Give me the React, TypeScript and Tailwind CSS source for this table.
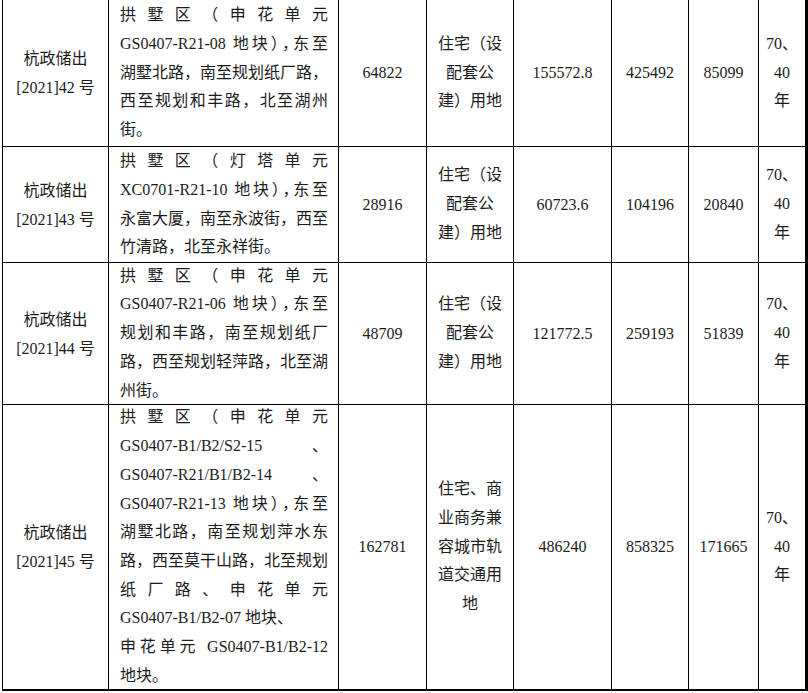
import type { ReactNode } from "react";

type Line = { t: ReactNode; j?: boolean };

type Row = {
  no: string;
  desc: Line[];
  area: string;
  use: string[];
  build: string;
  price: string;
  deposit: string;
};

// half-width comma after a closing bracket, so the code lines fit
const Cm = () => <span className="[font-feature-settings:'halt']">，</span>;

const rows: Row[] = [
  {
    no: "42",
    desc: [
      { t: "拱墅区（申花单元", j: true },
      { t: <>GS0407-R21-08 地块）<Cm />东至</>, j: true },
      { t: "湖墅北路，南至规划纸厂路，", j: true },
      { t: "西至规划和丰路，北至湖州", j: true },
      { t: "街。" },
    ],
    area: "64822",
    use: ["住宅（设", "配套公", "建）用地"],
    build: "155572.8",
    price: "425492",
    deposit: "85099",
  },
  {
    no: "43",
    desc: [
      { t: "拱墅区（灯塔单元", j: true },
      { t: <>XC0701-R21-10 地块）<Cm />东至</>, j: true },
      { t: "永富大厦，南至永波街，西至", j: true },
      { t: "竹清路，北至永祥街。" },
    ],
    area: "28916",
    use: ["住宅（设", "配套公", "建）用地"],
    build: "60723.6",
    price: "104196",
    deposit: "20840",
  },
  {
    no: "44",
    desc: [
      { t: "拱墅区（申花单元", j: true },
      { t: <>GS0407-R21-06 地块）<Cm />东至</>, j: true },
      { t: "规划和丰路，南至规划纸厂", j: true },
      { t: "路，西至规划轻萍路，北至湖", j: true },
      { t: "州街。" },
    ],
    area: "48709",
    use: ["住宅（设", "配套公", "建）用地"],
    build: "121772.5",
    price: "259193",
    deposit: "51839",
  },
  {
    no: "45",
    desc: [
      { t: "拱墅区（申花单元", j: true },
      { t: "GS0407-B1/B2/S2-15 、", j: true },
      { t: "GS0407-R21/B1/B2-14 、", j: true },
      { t: <>GS0407-R21-13 地块）<Cm />东至</>, j: true },
      { t: "湖墅北路，南至规划萍水东", j: true },
      { t: "路，西至莫干山路，北至规划", j: true },
      { t: "纸厂路、申花单元", j: true },
      { t: "GS0407-B1/B2-07 地块、" },
      { t: "申花单元 GS0407-B1/B2-12", j: true },
      { t: "地块。" },
    ],
    area: "162781",
    use: ["住宅、商", "业商务兼", "容城市轨", "道交通用", "地"],
    build: "486240",
    price: "858325",
    deposit: "171665",
  },
];

function Cell({ children, last, bottom }: { children: ReactNode; last?: boolean; bottom?: boolean }) {
  return (
    <div
      className={
        "flex flex-col items-center justify-center border-black text-center " +
        (last ? "border-r-[3px] " : "border-r ") +
        (bottom ? "border-b-2" : "border-b")
      }
    >
      {children}
    </div>
  );
}

export default function App() {
  return (
    <div className="h-[693px] w-[808px] overflow-hidden bg-white text-[16px] text-[#1c1c1c] font-['Liberation_Serif','Noto_Sans_CJK_SC',serif]">
      <div className="ml-[2px] grid grid-cols-[106px_230px_88px_87px_98px_77px_70px_49px] grid-rows-[147px_116px_142px_286px] border-l border-black">
        {rows.map((r, i) => {
          const bottom = i === rows.length - 1;
          return (
            <div key={r.no} className="contents">
              <Cell bottom={bottom}>
                <div className="leading-[29px]">
                  <div>杭政储出</div>
                  <div>[2021]{r.no} 号</div>
                </div>
              </Cell>
              <div
                className={
                  "flex flex-col justify-center border-r border-black pl-[11px] pr-[10px] leading-[28.7px] " +
                  (bottom ? "border-b-2" : "border-b")
                }
              >
                {r.desc.map((l, k) => (
                  <div
                    key={k}
                    className={
                      "whitespace-nowrap " + (l.j ? "text-justify [text-align-last:justify]" : "text-left")
                    }
                  >
                    {l.t}
                  </div>
                ))}
              </div>
              <Cell bottom={bottom}>{r.area}</Cell>
              <Cell bottom={bottom}>
                <div className="leading-[28.7px]">
                  {r.use.map((u) => (
                    <div key={u}>{u}</div>
                  ))}
                </div>
              </Cell>
              <Cell bottom={bottom}>{r.build}</Cell>
              <Cell bottom={bottom}>{r.price}</Cell>
              <Cell bottom={bottom}>{r.deposit}</Cell>
              <Cell last bottom={bottom}>
                <div className="leading-[28.7px]">
                  <div>70、</div>
                  <div>40</div>
                  <div>年</div>
                </div>
              </Cell>
            </div>
          );
        })}
      </div>
    </div>
  );
}
